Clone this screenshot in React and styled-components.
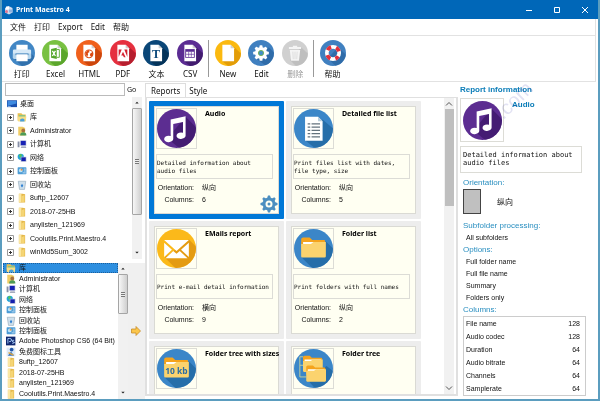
import { useState } from "react";
import styled, { createGlobalStyle } from "styled-components";

const GlobalStyle = createGlobalStyle`
  * { box-sizing: border-box; }
  body {
    margin: 0;
    background: #fff;
    color: #111;
    font: 8px/10px "Noto Sans", "Noto Sans CJK SC", sans-serif;
  }
  button, input, table {
    font: inherit;
    color: inherit;
  }
  button {
    padding: 0;
    border: 0;
    background: none;
    white-space: nowrap;
  }
  ul { list-style: none; margin: 0; padding: 0; }
  h1, h2, h3, p, dl, dd { margin: 0; font-size: inherit; }
  svg { display: block; flex: none; }
`;

const narrow = `"Liberation Sans", "Noto Sans CJK SC", sans-serif`;

/* ---------- round icons ---------- */

const glyphs = {
  printer: (
    <>
      <path d="M12 43 50 30 60 40 48 60 30 60Z" fill="#1f5c96" opacity=".5" />
      <rect x="17" y="11" width="26" height="14" fill="#fff" />
      <rect x="9" y="22" width="42" height="21" rx="3" fill="#d6e9f7" />
      <path d="M9 31h42v9a3 3 0 0 1-3 3H12a3 3 0 0 1-3-3z" fill="#b5d5ec" />
      <rect x="15" y="31" width="30" height="4" fill="#4384bd" />
      <rect x="17" y="33" width="26" height="16" fill="#fff" />
    </>
  ),
  excel: (
    <>
      <Sheet shade="#4f9a24" />
      <path d="M21 21 34 18v26l-13-3z" fill="#54a62a" />
      <path d="m24 25 7 12m0-12-7 12" stroke="#fff" strokeWidth="3" />
      <path d="M34 22h6v18h-6" stroke="#54a62a" strokeWidth="2" fill="none" />
    </>
  ),
  html: (
    <>
      <Sheet shade="#bd3c05" />
      <circle cx="30" cy="32" r="9" fill="none" stroke="#dc4a12" strokeWidth="2.5" />
      <path d="M22 29q4-6 8-6l1 5-4 2 1 3-2 6q-4-4-4-10zm11 2 6-4v7l-4 5-3-4z" fill="#dc4a12" />
    </>
  ),
  pdf: (
    <>
      <Sheet shade="#a31728" />
      <path d="M20 22h7l-7 17zM40 22h-7l7 17zM30 27l6 13h-4l-2-4h-4z" fill="#d4202f" />
    </>
  ),
  text: (
    <>
      <Sheet shade="#022c4e" />
      <text x="30" y="42" textAnchor="middle" fontSize="28" fontWeight="700" fontFamily="Liberation Serif, serif" fill="#0d4a7c">T</text>
    </>
  ),
  csv: (
    <>
      <Sheet shade="#371560" />
      <rect x="19" y="21" width="22" height="20" fill="#5b2c93" />
      <path d="M21 27h18v12H21z" fill="#fff" />
      <path d="M21 33h18M27 27v12M33 27v12" stroke="#5b2c93" strokeWidth="1.5" />
    </>
  ),
  page: <Sheet shade="#d99204" />,
  gear: (
    <>
      <path d="m20 44 28-27 12 12v20L42 60z" fill="#245f99" opacity=".6" />
      <g fill="#fff">
        <circle cx="30" cy="30" r="14" />
        {[0, 45, 90, 135].map((a) => (
          <rect key={a} x="26.5" y="12" width="7" height="36" rx="2" transform={`rotate(${a} 30 30)`} />
        ))}
      </g>
      <circle cx="30" cy="30" r="6" fill="#4190c7" stroke="#70b04c" strokeWidth="2" />
    </>
  ),
  trash: (
    <>
      <path d="m19 47 25-30 16 15v28H32z" fill="#aaa" opacity=".45" />
      <path d="M16 16h9v-3h10v3h9v5H16zM18 23h24l-3 25H21z" fill="#f4f4f4" />
      <path d="m25 27 1 17M30 27v17M35 27l-1 17" stroke="#d4d4d4" strokeWidth="1.5" />
    </>
  ),
  help: (
    <>
      <path d="m18 42 24-25 18 17v26H36z" fill="#245f99" opacity=".6" />
      <g transform="rotate(45 30 30)" fill="none" strokeWidth="9">
        <circle cx="30" cy="30" r="14" stroke="#fff" />
        <circle cx="30" cy="30" r="14" stroke="#e0303c" strokeDasharray="11 11" strokeDashoffset="5.5" />
      </g>
    </>
  ),
  music: (
    <>
      <path d="M44 12 60 28v32H34L16 45z" fill="#3c1769" opacity=".75" />
      <path d="M21 16 44 11v30a7 5 0 1 1-4-4.500V20l-15 3v23a7 5 0 1 1-4-4.500z" fill="#fff" />
    </>
  ),
  list: (
    <>
      <path d="m17 48 27-32 16 14v30H32z" fill="#20659f" opacity=".75" />
      <path d="M17 12h20l7 7v30H17z" fill="#fff" />
      <path d="M37 12v7h7z" fill="#b4cada" />
      <path d="M21 23h4M27 23h13M21 28h4M27 28h13M21 33h4M27 33h13M21 38h4M27 38h13M21 43h4M27 43h13" stroke="#63727d" strokeWidth="2" />
    </>
  ),
  mail: (
    <>
      <path d="m12 44 37-28 11 11v33H28z" fill="#dc9210" opacity=".75" />
      <path d="M11 17h38L30 34zM11 21l12 11-12 11zM49 21 37 32l12 11zM25 34l5 4 5-4 12 11H13z" fill="#fff" />
    </>
  ),
  folder: (
    <>
      <path d="m12 44 37-25 11 11v30H28z" fill="#20659f" opacity=".75" />
      <Folder />
    </>
  ),
  folderSize: (
    <>
      <path d="m12 44 37-25 11 11v30H28z" fill="#20659f" opacity=".75" />
      <Folder />
      <text x="30" y="39" textAnchor="middle" fontSize="13" fontWeight="700" fontFamily="Open Sans, sans-serif" fill="#2b6ea4">10 kb</text>
    </>
  ),
  folderTree: (
    <>
      <path d="m22 49 28-23 10 8v26H32z" fill="#20659f" opacity=".75" />
      <path d="M14 12H9v31h10M9 25h7" fill="none" stroke="#c2cf9b" strokeWidth="1.5" />
      <g transform="translate(5 0) scale(.8)"><Folder /></g>
      <g transform="translate(10 15) scale(.8)"><Folder /></g>
    </>
  ),
};

function Sheet({ shade }) {
  return (
    <>
      <path d="m17 49 27-33 16 15v29H30z" fill={shade} opacity=".7" />
      <path d="M17 11h19l8 8v30H17z" fill="#fff" />
      <path d="M36 11v8h8z" fill="#cfcfcf" />
    </>
  );
}

function Folder() {
  return (
    <>
      <path d="M11 16q0-3 3-3h10l4 4h18q2 0 2 2v12H11z" fill="#f5a31c" />
      <path d="M14 20h32v10H14z" fill="#fff" />
      <path d="M11 23h15l4-3h19v22q0 2-2 2H13q-2 0-2-2z" fill="#fbd36e" />
    </>
  );
}

function RoundIcon({ name, color, size = 26 }) {
  return (
    <svg width={size} height={size} viewBox="0 0 60 60" aria-hidden="true">
      <clipPath id={`disc-${name}`}>
        <circle cx="30" cy="30" r="30" />
      </clipPath>
      <g clipPath={`url(#disc-${name})`}>
        <rect width="60" height="60" fill={color} />
        {glyphs[name]}
      </g>
    </svg>
  );
}

/* ---------- small file icons ---------- */

const smallGlyphs = {
  desktop: (
    <>
      <path d="M0 2h16v11H0z" fill="#1b50ae" />
      <path d="M1 3h14v4L1 11z" fill="#3f8be0" />
      <path d="M1 12h5" stroke="#bfe3ff" />
    </>
  ),
  library: (
    <>
      <path d="M1 2h6l2 2h5v10H1z" fill="#e9bf4f" />
      <path d="M3 5h10v5H3z" fill="#7fc48b" />
      <path d="M1 7h14l-1 8H2z" fill="#f8de86" />
      <path d="M5 15v-3q4-3 7 0v3z" fill="#4aa0dc" />
    </>
  ),
  user: (
    <>
      <path d="M2 1h7l4 2v12H2z" fill="#f0cc64" />
      <circle cx="10" cy="7" r="3" fill="#a8713e" />
      <path d="M5 15q0-5 5-5t5 5z" fill="#4d9b58" />
    </>
  ),
  computer: (
    <>
      <path d="M5 2h10v9H5z" fill="#c9cfe0" />
      <path d="M6 3h8v7H6z" fill="#1822b4" />
      <path d="M1 4h3v9H1zM7 12h7l1 2H6z" fill="#8890a8" />
    </>
  ),
  network: (
    <>
      <circle cx="6" cy="6" r="5" fill="#23a4d8" />
      <path d="M3 3q4-3 5 1L5 8z" fill="#55c35a" />
      <path d="M6 6h9v8H6z" fill="#b8bfd4" />
      <path d="M7 7h7v6H7z" fill="#1420ad" />
    </>
  ),
  panel: (
    <>
      <rect x="1" y="2" width="14" height="11" rx="1" fill="#4c9cd6" />
      <circle cx="6" cy="7" r="3" fill="#bfe4f7" />
      <path d="M6 7V4a3 3 0 0 1 3 3z" fill="#f08b2f" />
      <path d="M11 5h3M11 8h3M9 11h5" stroke="#fff" />
    </>
  ),
  bin: (
    <>
      <path d="M2 2h12l-2 13H4z" fill="#cfe0ec" stroke="#93a9b9" />
      <path d="M6 9l2-3 2 3-2 3z" fill="#2d7fd2" />
    </>
  ),
  folder: (
    <>
      <path d="M3 1h6l4 1v13H3z" fill="#e5b84b" />
      <path d="M3 1h4v13l-4 1z" fill="#fbe7a2" />
      <path d="M7 5l5-2v11l-5 1z" fill="#f5d575" />
    </>
  ),
  photoshop: (
    <>
      <path d="M0 1h15v14H0z" fill="#10286f" />
      <path d="M3 12V4h3q3 0 3 2.500T5 9M13 7q-3-1-3 1t3 2-3 2" fill="none" stroke="#a9cdf8" strokeWidth="1.5" />
    </>
  ),
  tool: (
    <>
      <path d="M1 1h14v14H1z" fill="#dce9f7" />
      <circle cx="9" cy="4" r="3" fill="#2358aa" />
      <path d="M3 14 8 7l5 7z" fill="#3b75bf" />
      <path d="m4 9 8 4" stroke="#e0a63e" strokeWidth="2" />
    </>
  ),
};

function SmallIcon({ name }) {
  return (
    <svg width="10" height="10" viewBox="0 0 16 16" aria-hidden="true">
      {smallGlyphs[name]}
    </svg>
  );
}

/* ---------- data ---------- */

const toolGroups = [
  [
    ["printer", "#4287c5", "打印"],
    ["excel", "#79c142", "Excel"],
    ["html", "#f0601c", "HTML"],
    ["pdf", "#e5303f", "PDF"],
    ["text", "#0a4677", "文本"],
    ["csv", "#5b2c93", "CSV"],
  ],
  [
    ["page", "#fbb90f", "New"],
    ["gear", "#4080c0", "Edit"],
    ["trash", "#d0d0d0", "删除", true],
  ],
  [["help", "#4080c0", "帮助"]],
];

const treeItems = [
  ["library", "库"],
  ["user", "Administrator"],
  ["computer", "计算机"],
  ["network", "网络"],
  ["panel", "控制面板"],
  ["bin", "回收站"],
  ["folder", "8uftp_12607"],
  ["folder", "2018-07-25HB"],
  ["folder", "anylisten_121969"],
  ["folder", "Coolutils.Print.Maestro.4"],
  ["folder", "winMd5Sum_3002"],
];

const fileItems = [
  ...treeItems.slice(0, 6),
  ["panel", "控制面板"],
  ["photoshop", "Adobe Photoshop CS6 (64 Bit)"],
  ["tool", "免费图标工具"],
  ...treeItems.slice(6, 10),
];

const reports = [
  { name: "Audio", icon: "music", color: "#5c2d91", text: "Detailed information about audio files", orientation: "纵向", count: 6 },
  { name: "Detailed file list", icon: "list", color: "#3b86c8", text: "Print files list with dates, file type, size", orientation: "纵向", count: 5 },
  { name: "EMails report", icon: "mail", color: "#fbb91a", text: "Print e-mail detail information", orientation: "横向", count: 9 },
  { name: "Folder list", icon: "folder", color: "#3b86c8", text: "Print folders with full names", orientation: "纵向", count: 2 },
  { name: "Folder tree with sizes", icon: "folderSize", color: "#3b86c8" },
  { name: "Folder tree", icon: "folderTree", color: "#3b86c8" },
];

const columns = [
  ["File name", 128],
  ["Audio codec", 128],
  ["Duration", 64],
  ["Audio bitrate", 64],
  ["Channels", 64],
  ["Samplerate", 64],
];

/* ---------- app ---------- */

export default function App() {
  const [selected, setSelected] = useState("Audio");
  const [file, setFile] = useState(0);

  return (
    <Window>
      <GlobalStyle />
      <TitleBar>
        <svg width="10" height="10" viewBox="0 0 20 20" aria-hidden="true">
          <path d="M2 6 9 2l8 4v9l-7 4-8-4z" fill="#cfdcf0" />
          <path d="M4 3h6v6H4z" fill="#fff" />
          <path d="M10 9h7v6h-7z" fill="#8fb2df" />
          <circle cx="5" cy="13" r="3" fill="#df7490" />
        </svg>
        <h1>Print Maestro 4</h1>
        <button aria-label="Minimize"><WinIcon d="M1 4.500h6" /></button>
        <button aria-label="Maximize"><WinIcon d="M1.500 1.500h5v5h-5z" /></button>
        <button aria-label="Close"><WinIcon d="m1 1 6 6m0-6L1 7" /></button>
      </TitleBar>
      <MenuBar>
        {["文件", "打印", "Export", "Edit", "帮助"].map((m) => (
          <button key={m}>{m}</button>
        ))}
      </MenuBar>
      <Toolbar>
        {toolGroups.map((group, i) => (
          <ToolGroup key={i} $count={group.length}>
            {group.map(([icon, color, label, disabled]) => (
              <ToolButton key={label} disabled={disabled}>
                <RoundIcon name={icon} color={color} />
                {label}
              </ToolButton>
            ))}
          </ToolGroup>
        ))}
      </Toolbar>

      <Main>
        <Sidebar>
          <PathRow>
            <input aria-label="Path" />
            <button>Go</button>
          </PathRow>
          <TreePane>
            <Rows $pad={4}>
              <li><Row><SmallIcon name="desktop" />桌面</Row></li>
              {treeItems.map(([icon, label]) => (
                <li key={label}>
                  <Row>
                    <Plus />
                    <SmallIcon name={icon} />
                    {label}
                  </Row>
                </li>
              ))}
            </Rows>
            <ScrollBar thumb={107} grip />
          </TreePane>
          <FilePane>
            <Rows>
              {fileItems.map(([icon, label], i) => (
                <li key={i}>
                  <Row $dense $active={i === file} onClick={() => setFile(i)}>
                    <SmallIcon name={icon} />
                    {label}
                  </Row>
                </li>
              ))}
            </Rows>
            <ScrollBar thumb={40} grip />
            <AddButton aria-label="Add">
              <svg width="10" height="10" viewBox="0 0 20 20">
                <path d="M1 6h9V1l9 9-9 9v-5H1z" fill="#fbc64b" stroke="#c58a22" strokeWidth="1.5" />
              </svg>
            </AddButton>
          </FilePane>
        </Sidebar>

        <Center>
          <Tabs>
            <Tab $active>Reports</Tab>
            <Tab>Style</Tab>
          </Tabs>
          <ReportPane>
            <Cards>
              {reports.map((r) => (
                <Card key={r.name} $selected={r.name === selected} onClick={() => setSelected(r.name)}>
                  <CardBody>
                    <CardHead>
                      <IconBox><RoundIcon name={r.icon} color={r.color} size={39} /></IconBox>
                      <h3>{r.name}</h3>
                    </CardHead>
                    <Description>{r.text}</Description>
                    {r.count && (
                      <Facts>
                        <dt>Orientation:</dt>
                        <dd>{r.orientation}</dd>
                        <dt>Columns:</dt>
                        <dd>{r.count}</dd>
                      </Facts>
                    )}
                    {r.name === selected && (
                      <SettingsButton aria-label="Report settings"><Cog /></SettingsButton>
                    )}
                  </CardBody>
                </Card>
              ))}
            </Cards>
            <ScrollBar thumb={97} flat />
          </ReportPane>
        </Center>

        <Info>
          <h2>Report information</h2>
          <InfoHead>
            <IconBox $large><RoundIcon name="music" color="#5c2d91" size={39} /></IconBox>
            <h3>Audio</h3>
          </InfoHead>
          <Description $large>Detailed information about audio files</Description>
          <InfoLabel>Orientation:</InfoLabel>
          <PaperRow><Paper />纵向</PaperRow>
          <InfoLabel>Subfolder processing:</InfoLabel>
          <InfoItem>All subfolders</InfoItem>
          <InfoLabel>Options:</InfoLabel>
          <InfoItem>Full folder name</InfoItem>
          <InfoItem>Full file name</InfoItem>
          <InfoItem>Summary</InfoItem>
          <InfoItem>Folders only</InfoItem>
          <InfoLabel>Columns:</InfoLabel>
          <ColumnTable>
            <tbody>
              {columns.map(([name, width]) => (
                <tr key={name}>
                  <td>{name}</td>
                  <td>{width}</td>
                </tr>
              ))}
            </tbody>
          </ColumnTable>
          <Watermark aria-hidden="true">.com</Watermark>
        </Info>
      </Main>
    </Window>
  );
}

function WinIcon({ d }) {
  return (
    <svg width="8" height="8" viewBox="0 0 8 8" aria-hidden="true">
      <path d={d} fill="none" stroke="#fff" />
    </svg>
  );
}

function Plus() {
  return (
    <svg width="7" height="7" viewBox="0 0 7 7" aria-hidden="true">
      <path d="M.5.5h6v6h-6z" fill="#fff" stroke="#9a9a9a" />
      <path d="M2 3.500h3M3.500 2v3" stroke="#333" />
    </svg>
  );
}

function Cog() {
  return (
    <svg width="18" height="18" viewBox="0 0 36 36" aria-hidden="true">
      <circle cx="18" cy="18" r="10" fill="none" stroke="#4d8fc0" strokeWidth="6" />
      {[0, 45, 90, 135, 180, 225, 270, 315].map((a) => (
        <path key={a} d="M14 7 16 1h4l2 6z" fill="#4d8fc0" transform={`rotate(${a} 18 18)`} />
      ))}
      <circle cx="18" cy="18" r="3" fill="#4d8fc0" />
    </svg>
  );
}

function ScrollBar({ thumb, flat, grip }) {
  return (
    <Track>
      <Arrow d="m1 5 3-3 3 3" flat={flat} />
      <Thumb $size={thumb} $flat={flat}>
        {grip && <Grip />}
      </Thumb>
      <Arrow d="m1 2 3 3 3-3" flat={flat} />
    </Track>
  );
}

function Arrow({ d, flat }) {
  return (
    <svg width="8" height="8" viewBox={flat ? "0 0 8 7" : "-3 -3 14 14"} aria-hidden="true">
      <path d={d} fill={flat ? "none" : "#222"} stroke={flat ? "#555" : "none"} />
    </svg>
  );
}

const Window = styled.div`
  display: flex;
  flex-direction: column;
  height: 100vh;
  border: 2px solid #5b9dbf;
  border-top: 0;
  overflow: hidden;
`;

const TitleBar = styled.header`
  display: flex;
  flex: none;
  align-items: center;
  height: 19px;
  margin: 0 -2px;
  padding: 0 1px 0 4px;
  background: #0067b8;
  color: #fff;
  h1 {
    flex: 1;
    margin-left: 2px;
    font-size: 7px;
  }
  button {
    display: grid;
    place-items: center;
    width: 28px;
    height: 19px;
  }
`;

const MenuBar = styled.nav`
  display: flex;
  flex: none;
  gap: 8px;
  height: 17px;
  margin-right: 2px;
  padding-left: 8px;
  border-bottom: 1px solid #e2e2e2;
  border-right: 1px solid #e2e2e2;
`;

const Toolbar = styled.div`
  display: flex;
  flex: none;
  height: 46px;
  margin-right: 2px;
  padding: 4px 3px;
  border-bottom: 1px solid #e2e2e2;
  border-right: 1px solid #e2e2e2;
`;

const ToolGroup = styled.div`
  display: grid;
  grid-template-columns: repeat(${(p) => p.$count}, 1fr);
  flex: 0 0 ${(p) => (p.$count === 6 ? 202 : p.$count * 34 + 2)}px;
  & + & {
    margin-left: 1px;
    padding-left: 2px;
    border-left: 1px solid #999;
  }
`;

const ToolButton = styled.button`
  display: flex;
  flex-direction: column;
  align-items: center;
  gap: 2px;
  line-height: 11px;
  &:disabled {
    color: #999;
  }
`;

const Main = styled.div`
  display: flex;
  flex: 1;
  min-height: 0;
`;

const Sidebar = styled.aside`
  display: flex;
  flex-direction: column;
  flex: 0 0 143px;
  padding-left: 1px;
`;

const PathRow = styled.div`
  display: flex;
  flex: none;
  height: 15px;
  padding: 1px 2px;
  gap: 2px;
  input {
    width: 120px;
    border: 1px solid #bbb;
    background: #fff;
  }
  button {
    font-size: 7px;
  }
`;

const TreePane = styled.div`
  display: flex;
  flex: 0 0 162px;
  padding-right: 3px;
`;

const FilePane = styled.div`
  display: flex;
  flex: 1;
  min-height: 0;
  margin-top: 4px;
  background: #f0f0f0;
`;

const Rows = styled.ul`
  display: grid;
  grid-auto-rows: 1fr;
  flex: 1;
  min-width: 0;
  padding-left: ${(p) => p.$pad || 0}px;
  background: #fff;
`;

const Row = styled.button`
  display: flex;
  align-items: center;
  gap: 3px;
  width: 100%;
  height: 100%;
  padding-left: ${(p) => (p.$dense ? 3 : 0)}px;
  font: 7px/10px ${narrow};
  background: ${(p) => (p.$active ? "#2d8fe0" : "none")};
  outline: ${(p) => (p.$active ? "1px dotted #1c5f9c" : "none")};
  outline-offset: -1px;
`;

const Track = styled.div`
  display: flex;
  flex-direction: column;
  align-items: center;
  flex: 0 0 10px;
  padding: 2px 0;
  background: #f1f1f1;
`;

const Thumb = styled.div`
  display: grid;
  place-items: center;
  flex: none;
  width: ${(p) => (p.$flat ? 9 : 10)}px;
  height: ${(p) => p.$size}px;
  margin: 1px 0 auto;
  border: ${(p) => (p.$flat ? "0" : "1px solid #a5a5a5")};
  border-radius: ${(p) => (p.$flat ? 0 : 1)}px;
  background: ${(p) => (p.$flat ? "#bfbfbf" : "linear-gradient(90deg, #f7f7f7, #cfcfcf)")};
`;

const Grip = styled.span`
  width: 4px;
  height: 5px;
  background: repeating-linear-gradient(#777 0 1px, #eee 1px 2px);
`;

const AddButton = styled.button`
  display: grid;
  place-items: center;
  flex: 0 0 15px;
  margin-right: 2px;
`;

const Center = styled.section`
  display: flex;
  flex-direction: column;
  flex: 1;
  min-width: 0;
  padding-bottom: 3px;
`;

const Tabs = styled.div`
  display: flex;
  flex: none;
  height: 15px;
  padding-top: 1px;
`;

const Tab = styled.button`
  padding: 0 ${(p) => (p.$active ? 5 : 2)}px;
  border: 1px solid ${(p) => (p.$active ? "#ddd" : "transparent")};
  border-bottom: 0;
`;

const ReportPane = styled.div`
  display: flex;
  flex: 1;
  min-height: 0;
  padding-right: 2px;
  border: 2px solid #e0e0e0;
  border-top-width: 1px;
`;

const Cards = styled.div`
  display: grid;
  grid-template-columns: repeat(auto-fill, 135px);
  grid-auto-rows: 118px;
  gap: 2px;
  flex: 1;
  align-content: start;
  padding: 3px 0 0 2px;
  overflow: hidden;
`;

const Card = styled.article`
  padding: 5px;
  background: ${(p) => (p.$selected ? "#0078d7" : "#ededed")};
  border-radius: 1px;
`;

const CardBody = styled.div`
  position: relative;
  height: 100%;
  padding: 1px;
  border: 1px solid #dadad4;
  background: #fffff2;
`;

const CardHead = styled.div`
  display: flex;
  gap: 8px;
  h3 {
    margin-top: 1px;
    font-size: 7px;
    line-height: 10px;
    white-space: nowrap;
    color: #000;
  }
`;

const IconBox = styled.div`
  display: grid;
  place-items: center;
  flex: none;
  width: ${(p) => (p.$large ? 44 : 41)}px;
  height: ${(p) => (p.$large ? 44 : 41)}px;
  border: 1px solid #dcdcd6;
`;

const Description = styled.p`
  display: flex;
  align-items: center;
  height: ${(p) => (p.$large ? 27 : 25)}px;
  margin: ${(p) => (p.$large ? "4px 16px 4px 0" : "5px 4px 3px 0")};
  padding: 0 0 ${(p) => (p.$large ? 2 : 0)}px ${(p) => (p.$large ? 2 : 0)}px;
  border: 1px solid #dcdcd6;
  font: ${(p) => (p.$large ? 7 : 6)}px/8px "DejaVu Sans Mono", monospace;
`;

const Facts = styled.dl`
  display: grid;
  grid-template-columns: 38px 1fr;
  column-gap: 8px;
  grid-auto-rows: 12px;
  align-items: center;
  font: 7px/10px ${narrow};
  dt {
    text-align: right;
  }
`;

const SettingsButton = styled.button`
  position: absolute;
  right: 0;
  bottom: 0;
`;

const Info = styled.aside`
  position: relative;
  flex: 0 0 140px;
  padding: 3px 0 0 2px;
  h2, h3 {
    font: 700 8px/10px ${narrow};
    color: #0b7db8;
  }
`;

const InfoHead = styled.div`
  display: flex;
  gap: 8px;
  margin-top: 3px;
  h3 {
    margin-top: 2px;
  }
`;

const InfoLabel = styled.p`
  padding-left: 3px;
  font: 8px/12px ${narrow};
  color: #2a8fc0;
`;

const InfoItem = styled.p`
  padding-left: 6px;
  font: 7px/12px ${narrow};
`;

const PaperRow = styled.div`
  display: flex;
  align-items: center;
  gap: 16px;
  margin: 0 0 6px 3px;
`;

const Paper = styled.span`
  width: 18px;
  height: 25px;
  border: 1px solid #444;
  background: #c0c0c0;
`;

const ColumnTable = styled.table`
  width: 123px;
  height: 80px;
  margin-left: 3px;
  border: 1px solid #ccc;
  border-spacing: 0;
  font: 7px/10px ${narrow};
  td {
    padding: 0 2px;
  }
  td:last-child {
    padding-right: 5px;
    text-align: right;
  }
`;

const Watermark = styled.span`
  position: absolute;
  top: 8px;
  left: 34px;
  font: 20px/20px "Liberation Sans", sans-serif;
  color: #e2e2f3;
  mix-blend-mode: multiply;
  transform: rotate(-45deg);
  pointer-events: none;
`;
